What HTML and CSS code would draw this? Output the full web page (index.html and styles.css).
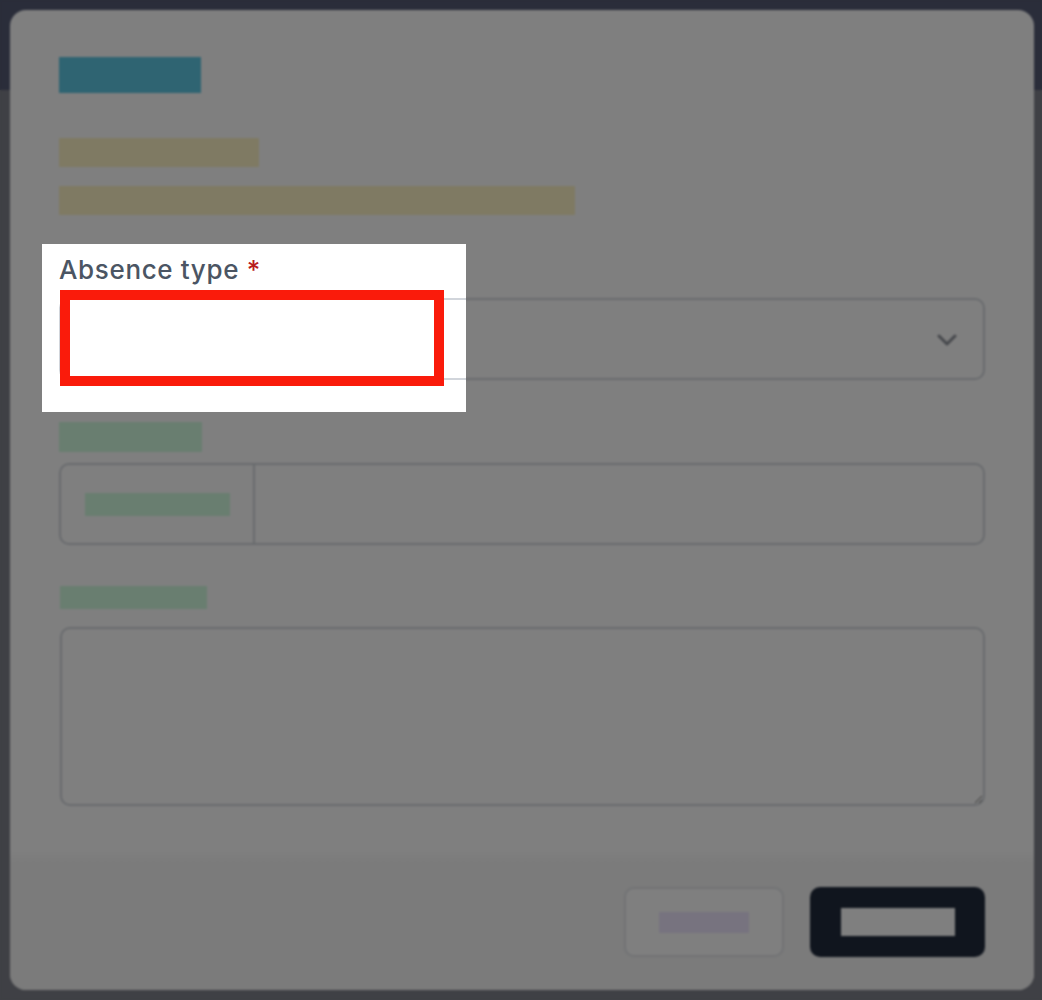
FILE: index.html
```html
<!DOCTYPE html>
<html lang="en">
<head>
<meta charset="utf-8">
<title>New absence</title>
<link rel="stylesheet" href="styles.css">
</head>
<body>
  <div class="page">
    <div class="modal">
      <div class="modal-body">
        <div class="redact title"></div>
        <div class="redact note note-short"></div>
        <div class="redact note note-long"></div>

        <div class="field field-type">
          <label class="label">Absence type <span class="req">*</span></label>
          <div class="select">
            <svg class="chevron" width="20" height="12" viewBox="0 0 20 12" aria-hidden="true">
              <path d="M2 2l8 8 8-8" fill="none" stroke="currentColor" stroke-width="3" stroke-linecap="round" stroke-linejoin="round"/>
            </svg>
          </div>
        </div>

        <div class="field field-dates">
          <div class="redact green label-a"></div>
          <div class="input-group">
            <div class="addon"><div class="redact green addon-text"></div></div>
            <div class="input-main"></div>
          </div>
        </div>

        <div class="field field-notes">
          <div class="redact green label-b"></div>
          <textarea class="textarea"></textarea>
        </div>
      </div>

      <div class="modal-footer">
        <button class="btn btn-cancel"><span class="redact btn-text-cancel"></span></button>
        <button class="btn btn-primary"><span class="redact btn-text-primary"></span></button>
      </div>
    </div>

    <div class="dim"></div>
    <div class="callout"></div>
  </div>
</body>
</html>
```

FILE: styles.css
```css
* { box-sizing: border-box; }

html, body {
  margin: 0;
  padding: 0;
}

body {
  width: 1042px;
  height: 1000px;
  overflow: hidden;
  font-family: Inter, "Noto Sans", "Liberation Sans", sans-serif;
  background: linear-gradient(#545a74 0, #545a74 90px, #7e808a 90px, #7e808a 100%);
}

.page {
  position: relative;
  width: 1042px;
  height: 1000px;
  padding: 10px 8px 0 10px;
}

.modal {
  height: 980px;
  background: #ffffff;
  border-radius: 16px;
  overflow: hidden;
  display: flex;
  flex-direction: column;
}

.modal-body {
  flex: 1;
  padding: 47px 49px 0 49px;
}

.redact { display: block; }

.title {
  width: 142px;
  height: 36px;
  background: #5ec8e4;
  margin-bottom: 45px;
}

.note {
  height: 29px;
  background: #fef4c6;
}

.note-short { width: 200px; margin-bottom: 19px; }
.note-long { width: 516px; }

.field-type { margin-top: 37px; }

.label {
  display: block;
  font-size: 26px;
  line-height: 36px;
  font-weight: 500;
  color: #4b5563;
  letter-spacing: 0.65px;
}

.req { color: #b91c1c; }

.select {
  margin-top: 10px;
  height: 82px;
  border: 2px solid #d1d5db;
  border-radius: 10px;
  display: flex;
  align-items: center;
  justify-content: flex-end;
  padding-right: 26px;
}

.chevron {
  display: block;
  color: #8b8f97;
  margin-top: 2px;
}

.field-dates { margin-top: 42px; }

.green { background: #d2fce0; }

.label-a { width: 143px; height: 30px; }

.input-group {
  margin-top: 11px;
  height: 82px;
  border: 2px solid #d1d5db;
  border-radius: 10px;
  display: flex;
}

.addon {
  width: 194px;
  border-right: 2px solid #d1d5db;
  display: flex;
  align-items: center;
  padding-left: 24px;
}

.addon-text { width: 145px; height: 23px; }

.input-main { flex: 1; }

.field-notes { margin-top: 41px; }

.label-b { width: 147px; height: 23px; margin-left: 1px; }

.textarea {
  display: block;
  margin-top: 18px;
  margin-left: 1px;
  width: 925px;
  height: 179px;
  border: 2px solid #d1d5db;
  border-radius: 10px;
  background: #ffffff;
  resize: vertical;
  font: inherit;
}

.modal-footer {
  height: 140px;
  background: linear-gradient(#ffffff 0, #f6f6f6 14px, #f6f6f6 100%);
  padding: 37px 49px 33px 49px;
  display: flex;
  justify-content: flex-end;
  gap: 26px;
}

.btn {
  height: 70px;
  border-radius: 10px;
  display: flex;
  align-items: center;
  justify-content: center;
  padding: 0;
  font: inherit;
}

.btn-cancel {
  width: 160px;
  background: #ffffff;
  border: 2px solid #e3e5e9;
}

.btn-text-cancel {
  width: 90px;
  height: 21px;
  background: #eee6ff;
}

.btn-primary {
  width: 175px;
  background: #202a3c;
  border: none;
}

.btn-text-primary {
  width: 114px;
  height: 28px;
  background: #ffffff;
}

/* dimming overlay with a spotlight hole around the "Absence type" field */
.dim {
  position: absolute;
  inset: 0;
  background: rgba(0, 0, 0, 0.5);
  backdrop-filter: blur(1.2px);
  -webkit-backdrop-filter: blur(1.2px);
  clip-path: polygon(evenodd,
    0 0, 100% 0, 100% 100%, 0 100%, 0 0,
    42px 244px, 466px 244px, 466px 412px, 42px 412px, 42px 244px);
  z-index: 5;
}

/* red annotation box */
.callout {
  position: absolute;
  left: 60px;
  top: 290px;
  width: 384px;
  height: 96px;
  border: 10px solid #fa1b0b;
  background: #ffffff;
  z-index: 6;
}
```
